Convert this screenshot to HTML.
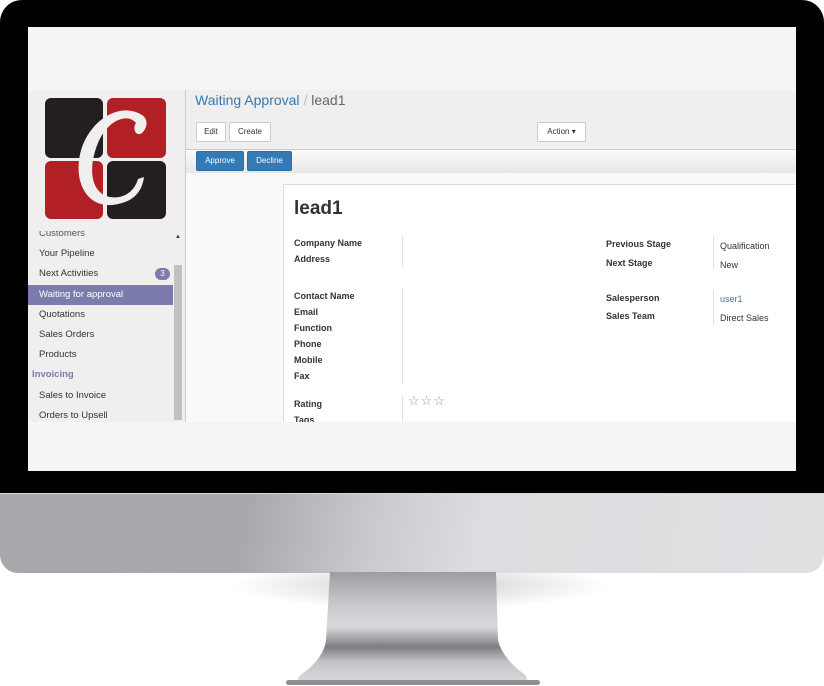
<!DOCTYPE html>
<html><head><style>
*{margin:0;padding:0;box-sizing:border-box}
body{width:824px;height:686px;background:#fff;position:relative;overflow:hidden;font-family:"Liberation Sans",sans-serif;}
.abs{position:absolute}
.bezel{left:0;top:0;width:824px;height:494px;background:#000;border-radius:22px 22px 0 0}
.screen{left:28px;top:27px;width:768px;height:444px;background:#f5f5f5;overflow:hidden}
.chin{left:0;top:493px;width:824px;height:80px;border-radius:0 0 18px 18px;background:linear-gradient(100deg,#a7a8ac 0%,#a8a9ad 30%,#c9cacd 45%,#dcdde0 58%,#dfe0e2 100%);border-top:1px solid #d8d8d8}
.nav a{display:block;font-size:9.5px;color:#333;padding-left:11px;height:20.2px;line-height:20px}
.lbl{font-size:9px;font-weight:bold;color:#333;position:absolute}
.val{font-size:9px;color:#333;position:absolute}
.btn{position:absolute;height:20px;border:1px solid #ccc;background:#fff;border-radius:2px;font-size:8px;color:#333;text-align:center;line-height:18px}
.bb{position:absolute;height:20px;background:#337ab7;border:1px solid #2e6da4;border-radius:2px;font-size:8px;color:#fff;text-align:center;line-height:18px}
.vl{position:absolute;width:1px;background:#e2e2e2}
</style></head><body>
<div class="abs" style="left:230px;top:560px;width:380px;height:50px;border-radius:50%;background:radial-gradient(ellipse at center,rgba(0,0,0,.2),rgba(0,0,0,0) 70%)"></div>
<div class="abs bezel"></div>
<div class="abs chin"></div>
<svg class="abs" style="left:280px;top:572px" width="266" height="114" viewBox="0 0 266 114">
<defs><linearGradient id="g" x1="0" y1="0" x2="0" y2="1">
<stop offset="0" stop-color="#9c9da1"/><stop offset=".3" stop-color="#c9cacd"/><stop offset=".5" stop-color="#d8d9dc"/><stop offset=".68" stop-color="#7d7e82"/><stop offset=".82" stop-color="#c4c5c8"/><stop offset="1" stop-color="#d7d8da"/></linearGradient></defs>
<path d="M50 0 H216 L218 68 Q222 86 244 102 Q250 108 244 110 H22 Q14 108 22 102 Q44 86 46 68 Z" fill="url(#g)"/>
<rect x="6" y="108" width="254" height="5" rx="2.5" fill="#8e8f93"/>
</svg>
<div class="abs screen">
 <div class="abs" style="left:0;top:63px;width:768px;height:332px;background:#f0eeee"></div>
 <div class="abs" style="left:0;top:63px;width:155px;height:332px;background:#f0eeee">
  <div class="abs" style="left:0;top:130px;width:145px;height:202px;overflow:hidden" >
   <div class="nav" style="margin-top:4px">
    <a style="color:#555">Customers</a><a>Your Pipeline</a>
    <a>Next Activities<span style="float:right;margin-right:3px;margin-top:4px;background:#7c7bad;color:#fff;border-radius:7px;width:15px;height:12px;font-size:8px;line-height:12px;text-align:center">3</span></a>
    <a style="background:#7c7bad;color:#fff;margin-right:0">Waiting for approval</a>
    <a>Quotations</a><a>Sales Orders</a><a>Products</a>
    <a style="padding-left:4px;color:#7c7bad;font-weight:bold">Invoicing</a>
    <a>Sales to Invoice</a><a>Orders to Upsell</a>
   </div>
  </div>
  <div class="abs" style="left:0;top:125px;width:145px;height:16px;background:#f0eeee"></div>
  <svg class="abs" style="left:16px;top:7px" width="123" height="123" viewBox="0 0 123 123">
   <rect x="1" y="1" width="58" height="60" rx="6" fill="#231f20"/>
   <rect x="63" y="1" width="59" height="60" rx="6" fill="#b21f24"/>
   <rect x="1" y="64" width="58" height="58" rx="6" fill="#b21f24"/>
   <rect x="63" y="64" width="59" height="58" rx="6" fill="#231f20"/>
   <path d="M98 18 C80 6 50 18 38 50 C28 80 40 110 68 108 C88 106 98 96 100 80 L94 82 C90 96 78 102 66 100 C46 96 44 70 54 46 C64 22 84 16 92 26 C88 32 92 40 98 36 C104 30 104 22 98 18 Z" fill="#f0eeee"/>
  </svg>
  <div class="abs" style="left:146px;top:175px;width:8px;height:155px;background:#c1c1c1"></div>
  <div class="abs" style="left:147px;top:144px;font-size:6px;color:#333">▲</div>
 </div>
 <div class="abs" style="left:157px;top:63px;width:1px;height:332px;background:#ccc"></div>
 <div class="abs" style="left:167px;top:65px;font-size:14px;color:#337ab7">Waiting Approval <span style="color:#bbb">/</span> <span style="color:#666">lead1</span></div>
 <div class="btn" style="left:168px;top:95px;width:30px">Edit</div>
 <div class="btn" style="left:201px;top:95px;width:42px">Create</div>
 <div class="btn" style="left:509px;top:95px;width:49px">Action ▾</div>
 <div class="abs" style="left:158px;top:122px;width:610px;height:24px;background:linear-gradient(#fafafa,#e8e8e8);border-top:1px solid #ccc"></div>
 <div class="bb" style="left:168px;top:124px;width:48px">Approve</div>
 <div class="bb" style="left:219px;top:124px;width:45px">Decline</div>
 <div class="abs" style="left:158px;top:146px;width:610px;height:249px;background:#f9f9f9"></div>
 <div class="abs" style="left:255px;top:157px;width:520px;height:240px;background:#fff;border:1px solid #ddd"></div>
 <div class="abs" style="left:266px;top:171px;font-size:19px;font-weight:bold;color:#333">lead1</div>
 <div class="lbl" style="left:266px;top:211px">Company Name</div>
 <div class="lbl" style="left:266px;top:227px">Address</div>
 <div class="vl" style="left:374px;top:208px;height:32px"></div>
 <div class="lbl" style="left:266px;top:264px">Contact Name</div>
 <div class="lbl" style="left:266px;top:280px">Email</div>
 <div class="lbl" style="left:266px;top:296px">Function</div>
 <div class="lbl" style="left:266px;top:312px">Phone</div>
 <div class="lbl" style="left:266px;top:328px">Mobile</div>
 <div class="lbl" style="left:266px;top:344px">Fax</div>
 <div class="vl" style="left:374px;top:261px;height:96px"></div>
 <div class="lbl" style="left:266px;top:372px">Rating</div>
 <div class="lbl" style="left:266px;top:388px">Tags</div>
 <div class="vl" style="left:374px;top:368px;height:30px"></div>
 <div class="abs" style="left:380px;top:366px;font-size:13px;color:#999;letter-spacing:1px">☆☆☆</div>
 <div class="lbl" style="left:578px;top:212px">Previous Stage</div>
 <div class="lbl" style="left:578px;top:231px">Next Stage</div>
 <div class="vl" style="left:685px;top:209px;height:33px"></div>
 <div class="val" style="left:692px;top:214px">Qualification</div>
 <div class="val" style="left:692px;top:233px">New</div>
 <div class="lbl" style="left:578px;top:266px">Salesperson</div>
 <div class="lbl" style="left:578px;top:284px">Sales Team</div>
 <div class="vl" style="left:685px;top:263px;height:35px"></div>
 <div class="val" style="left:692px;top:267px;color:#337ab7">user1</div>
 <div class="val" style="left:692px;top:286px">Direct Sales</div>
 <div class="abs" style="left:0;top:395px;width:768px;height:49px;background:#f5f5f5"></div>
</div>
</body></html>
